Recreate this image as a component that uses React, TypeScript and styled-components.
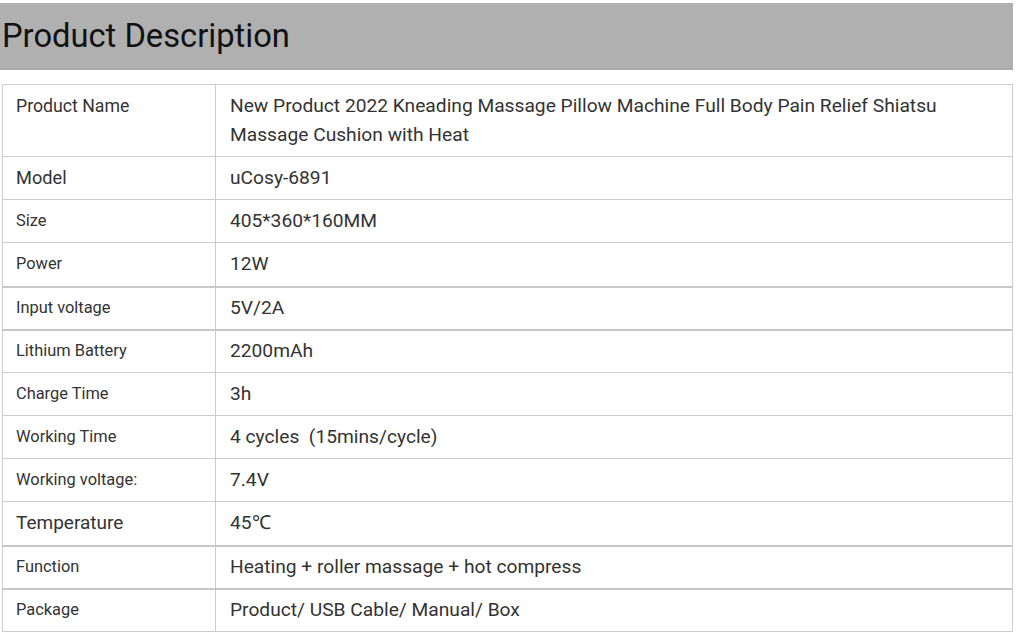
import React from 'react';
import styled, { createGlobalStyle } from 'styled-components';

const GlobalStyle = createGlobalStyle`
  html, body {
    margin: 0;
    padding: 0;
    background: #ffffff;
  }
  body {
    font-family: Roboto, "Liberation Sans", Arial, sans-serif;
    color: #333333;
  }
`;

const Page = styled.div`
  width: 1013px;
  padding-top: 3px;
`;

const TitleBar = styled.div`
  box-sizing: border-box;
  background: #b0b0b0;
  border-bottom: 2px solid #a8a8a8;
  height: 67px;
  display: flex;
  align-items: center;
  padding: 1px 0 0 2px;
`;

const Title = styled.h2`
  margin: 0;
  font-size: 32.7px;
  font-weight: 400;
  color: #111111;
  line-height: 1;
`;

const SpecTable = styled.table`
  margin: 14px 0 0 2px;
  width: 1011px;
  border-collapse: collapse;
  table-layout: fixed;
`;

const Row = styled.tr<{ $thick?: boolean }>`
  border-top: ${(p) => (p.$thick ? '2px solid #c8c8c8' : '1px solid #cccccc')};

  & > td {
    padding-top: ${(p) => (p.$thick ? '6px' : '7px')};
    padding-bottom: 6.4px;
  }
`;

const LabelCell = styled.td<{ $size: number }>`
  box-sizing: border-box;
  width: 213px;
  border: 1px solid #cccccc;
  padding: 7px 13px;
  vertical-align: top;
  font-size: ${(p) => p.$size}px;
  line-height: 28.8px;
  color: #333333;
`;

const ValueCell = styled.td`
  border: 1px solid #cccccc;
  padding: 7px 14px;
  vertical-align: top;
  font-size: 19.2px;
  line-height: 28.8px;
  color: #333333;
`;

type Spec = { label: string; value: string; size?: number; thick?: boolean };

const specs: Spec[] = [
  {
    label: 'Product Name',
    value:
      'New Product 2022 Kneading Massage Pillow Machine Full Body Pain Relief Shiatsu Massage Cushion with Heat',
    size: 17.7,
  },
  { label: 'Model', value: 'uCosy-6891', size: 18.2 },
  { label: 'Size', value: '405*360*160MM' },
  { label: 'Power', value: '12W' },
  { label: 'Input voltage', value: '5V/2A', thick: true },
  { label: 'Lithium Battery', value: '2200mAh', thick: true },
  { label: 'Charge Time', value: '3h' },
  { label: 'Working Time', value: '4 cycles\u00a0\u00a0(15mins/cycle)' },
  { label: 'Working voltage:', value: '7.4V' },
  { label: 'Temperature', value: '45\u2103', size: 19 },
  { label: 'Function', value: 'Heating + roller massage + hot compress', thick: true },
  { label: 'Package', value: 'Product/ USB Cable/ Manual/ Box', thick: true },
];

const App: React.FC = () => {
  return (
    <Page>
      <GlobalStyle />
      <TitleBar>
        <Title>Product Description</Title>
      </TitleBar>
      <SpecTable>
        <tbody>
          {specs.map((s) => (
            <Row key={s.label} $thick={s.thick}>
              <LabelCell $size={s.size ?? 16.4}>{s.label}</LabelCell>
              <ValueCell>{s.value}</ValueCell>
            </Row>
          ))}
        </tbody>
      </SpecTable>
    </Page>
  );
};

export default App;
